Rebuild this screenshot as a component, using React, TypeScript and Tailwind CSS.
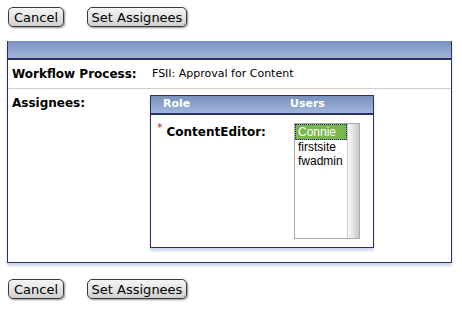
import React from "react";

function MacButton({ label, width }: { label: string; width: string }) {
  return (
    <button
      className={`${width} h-[20px] rounded-[5px] border border-[#3a3a3a] bg-gradient-to-b from-[#f4f4f4] via-[#e4e4e4] to-[#cfcfcf] text-[13px] leading-none text-black shadow-[1px_1px_2px_rgba(0,0,0,0.45)]`}
      style={{ fontFamily: '"DejaVu Sans", Verdana, sans-serif' }}
    >
      {label}
    </button>
  );
}

function ButtonRow() {
  return (
    <div className="flex gap-[23px] pl-[8px]">
      <MacButton label="Cancel" width="w-[56px]" />
      <MacButton label="Set Assignees" width="w-[100px]" />
    </div>
  );
}

const users = ["Connie", "firstsite", "fwadmin"];

export default function App() {
  return (
    <div
      className="w-[462px] h-[312px] bg-white pt-[7px] text-black"
      style={{ fontFamily: '"DejaVu Sans", Verdana, sans-serif' }}
    >
      <ButtonRow />

      {/* main panel */}
      <div className="ml-[7px] mt-[14px] w-[445px] h-[222px] border-x border-b border-[#2b2f68] shadow-[0_3px_2px_rgba(150,170,210,0.45)] flex flex-col">
        <div className="h-[19px] bg-gradient-to-b from-[#7890be] to-[#a2b6da] border-b-2 border-[#2b2f68]" />

        {/* workflow row */}
        <div className="h-[29px] flex items-center border-b border-[#cfcfcf]">
          <span className="w-[143px] pl-[4px] text-[12px] font-bold">Workflow Process:</span>
          <span className="text-[11px] pl-[1px]">FSII: Approval for Content</span>
        </div>

        {/* assignees row */}
        <div className="flex pt-[6px]">
          <span className="w-[142px] pl-[4px] text-[12px] font-bold leading-[14px] pt-[1px]">Assignees:</span>
          <div className="w-[224px] h-[153px] border border-[#2b2f68] shadow-[0_3px_2px_rgba(150,170,210,0.45)] flex flex-col">
            <div className="h-[19px] flex items-center bg-gradient-to-b from-[#7890be] to-[#a2b6da] border-b-2 border-[#2b2f68] text-white text-[11px] font-bold">
              <span className="w-[139px] pl-[12px]">Role</span>
              <span>Users</span>
            </div>
            <div className="flex pt-[8px]">
              <div className="w-[143px] flex items-start pl-[6px]">
                <span className="text-[#c02020] text-[11px] leading-[10px] mr-[4px]">*</span>
                <span className="text-[12px] font-bold leading-[14px] mt-[2px]">ContentEditor:</span>
              </div>
              <div className="w-[66px] h-[116px] border border-[#aaaaaa] flex">
                <div
                  className="flex-1 flex flex-col text-[12px] leading-[14px]"
                  style={{ fontFamily: '"Liberation Sans", Arial, sans-serif' }}
                >
                  {users.map((u, i) => (
                    <div
                      key={u}
                      className={
                        i === 0
                          ? "bg-[#79b64d] text-white pl-[2px] border border-dotted border-[#1a2a6a]"
                          : "pl-[3px]"
                      }
                    >
                      {u}
                    </div>
                  ))}
                </div>
                <div className="w-[12px] bg-gradient-to-r from-[#fafafa] via-[#e2e2e2] to-[#c8c8c8] border-l border-[#cccccc]" />
              </div>
            </div>
          </div>
        </div>
      </div>

      <div className="mt-[16px]">
        <ButtonRow />
      </div>
    </div>
  );
}
